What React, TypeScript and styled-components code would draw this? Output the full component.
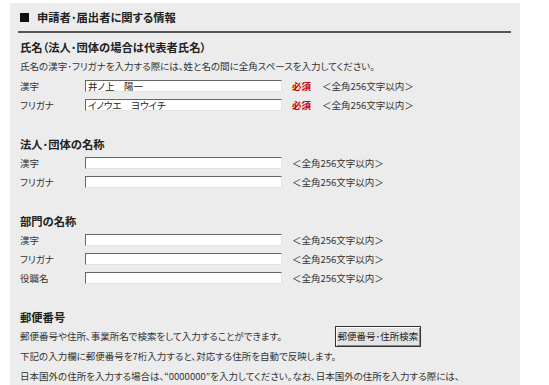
import { FC } from "react";
import styled, { createGlobalStyle } from "styled-components";

const GlobalStyle = createGlobalStyle`
  body {
    margin: 0;
    background: #ffffff;
    font-family: "Noto Sans CJK JP", "Noto Sans", sans-serif;
    font-feature-settings: "palt";
    color: #333;
  }
`;

type Field = {
  label: string;
  value?: string;
  required?: boolean;
};

const nameFields: Field[] = [
  { label: "漢字", value: "井ノ上　陽一", required: true },
  { label: "フリガナ", value: "イノウエ　ヨウイチ", required: true },
];

const corpFields: Field[] = [{ label: "漢字" }, { label: "フリガナ" }];

const deptFields: Field[] = [
  { label: "漢字" },
  { label: "フリガナ" },
  { label: "役職名" },
];

const FieldRows: FC<{ fields: Field[] }> = ({ fields }) => (
  <>
    {fields.map((f) => (
      <Row key={f.label}>
        <Label>{f.label}</Label>
        <TextInput defaultValue={f.value ?? ""} />
        {f.required && <Required>必須</Required>}
        <Limit>＜全角256文字以内＞</Limit>
      </Row>
    ))}
  </>
);

export default function App(): JSX.Element {
  return (
    <>
      <GlobalStyle />
      <Panel>
        <Header>
          <Square />
          申請者･届出者に関する情報
        </Header>

        <Section>
          <SectionTitle>氏名（法人･団体の場合は代表者氏名）</SectionTitle>
          <Note>
            氏名の漢字･フリガナを入力する際には、姓と名の間に全角スペースを入力してください。
          </Note>
          <FieldRows fields={nameFields} />
        </Section>

        <Section>
          <SectionTitle>法人･団体の名称</SectionTitle>
          <FieldRows fields={corpFields} />
        </Section>

        <Section>
          <SectionTitle>部門の名称</SectionTitle>
          <FieldRows fields={deptFields} />
        </Section>

        <Section>
          <SectionTitle>郵便番号</SectionTitle>
          <SearchLine>
            <NoteCol>郵便番号や住所、事業所名で検索をして入力することができます。</NoteCol>
            <SearchBtn type="button">郵便番号･住所検索</SearchBtn>
          </SearchLine>
          <Note>下記の入力欄に郵便番号を7桁入力すると、対応する住所を自動で反映します。</Note>
          <Note>
            日本国外の住所を入力する場合は、“0000000”を入力してください。なお、日本国外の住所を入力する際には、
          </Note>
        </Section>
      </Panel>
    </>
  );
}

const Panel = styled.div`
  margin: 3px 0 0 10px;
  width: 493px;
  padding: 0 9px 10px 8px;
  background: #ececec;
`;

const Header = styled.div`
  display: flex;
  align-items: center;
  height: 28px;
  margin-bottom: 6px;
  padding-left: 2px;
  border-bottom: 2px solid #555;
  font-size: 11.3px;
  font-weight: bold;
  color: #222;
`;

const Square = styled.span`
  display: inline-block;
  width: 9px;
  height: 9px;
  margin-right: 8px;
  background: #111;
`;

const Section = styled.div`
  padding-left: 2px;
  & + & {
    margin-top: 22px;
  }
`;

const SectionTitle = styled.div`
  height: 16px;
  margin-bottom: 1px;
  line-height: 16px;
  font-size: 11.3px;
  font-weight: bold;
  color: #222;
`;

const Note = styled.div`
  height: 20px;
  line-height: 20px;
  font-size: 9.5px;
  white-space: nowrap;
`;

const Row = styled.div`
  display: flex;
  align-items: center;
  height: 19px;
  font-size: 9.5px;
`;

const Label = styled.span`
  width: 65px;
`;

const TextInput = styled.input`
  box-sizing: border-box;
  width: 197px;
  height: 12px;
  padding: 0 2px;
  border: 1px solid;
  border-color: #666 #e4e4e4 #e4e4e4 #666;
  background: #fff;
  font: inherit;
  font-size: 9.5px;
  line-height: 10px;
  color: #222;
  outline: none;
`;

const Required = styled.span`
  margin-left: 10px;
  width: 20px;
  color: #cc0000;
  font-weight: bold;
`;

const Limit = styled.span`
  margin-left: 10px;
`;

const SearchLine = styled.div`
  display: flex;
  align-items: center;
  height: 20px;
`;

const NoteCol = styled.span`
  width: 315px;
  font-size: 9.5px;
  white-space: nowrap;
`;

const SearchBtn = styled.button`
  width: 86px;
  height: 21px;
  padding: 0;
  border: 1px solid #333;
  box-shadow: inset 1px 1px 0 #fff, inset -1px -1px 0 #888;
  background: #e4e4e4;
  font: inherit;
  font-size: 9.5px;
  white-space: nowrap;
  color: #222;
`;
